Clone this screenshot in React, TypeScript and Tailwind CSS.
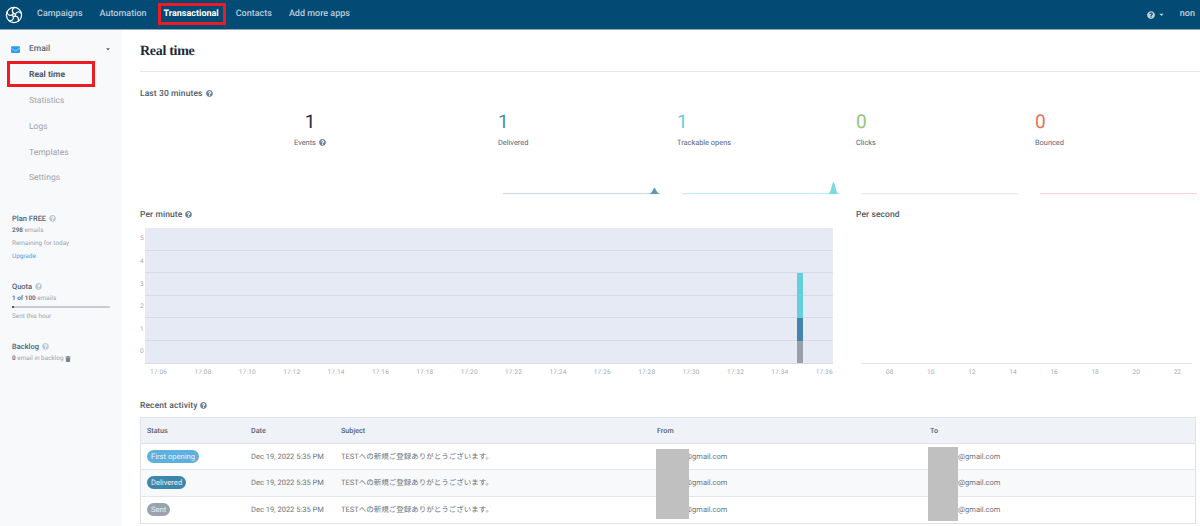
import { FaCaretDown, FaEnvelope, FaQuestionCircle, FaTrash } from 'react-icons/fa'

const navItems = ['Campaigns', 'Automation', 'Transactional', 'Contacts', 'Add more apps']
const sideItems = ['Real time', 'Statistics', 'Logs', 'Templates', 'Settings']
const minuteLabels = ['17:06', '17:08', '17:10', '17:12', '17:14', '17:16', '17:18', '17:20', '17:22', '17:24', '17:26', '17:28', '17:30', '17:32', '17:34', '17:36']
const secondLabels = ['08', '10', '12', '14', '16', '18', '20', '22']
const subject = 'TESTへの新規ご登録ありがとうございます。'

const stats = [
  { value: '1', label: 'Delivered', color: 'text-[#4c8cb0]', line: '#c9dfe9', peak: '#5f9ab9', top: 7 },
  { value: '1', label: 'Trackable opens', color: 'text-[#65d0dc]', line: '#c6eef2', peak: '#7dd8e2', top: 1 },
  { value: '0', label: 'Clicks', color: 'text-[#93c47d]', line: '#f0e6e6', peak: '', top: 0 },
  { value: '0', label: 'Bounced', color: 'text-[#e5705c]', line: '#f8d4d4', peak: '', top: 0 },
]

const rows = [
  { status: 'First opening', badge: 'bg-[#5fb0de]' },
  { status: 'Delivered', badge: 'bg-[#3f86ab]' },
  { status: 'Sent', badge: 'bg-[#9aa3ad]' },
]

function Help({ light }: { light?: boolean }) {
  return <FaQuestionCircle className={`inline-block w-[7px] h-[7px] ml-[3px] align-[-0.5px] ${light ? 'text-[#bccad8]' : 'text-[#6f8699]'}`} />
}

function Logo() {
  return (
    <svg width="18" height="18" viewBox="0 0 18 18" fill="none" stroke="white" strokeWidth="1.25" strokeLinecap="round">
      <circle cx="9" cy="9" r="7.6" />
      <circle cx="9" cy="9" r="1.5" />
      {[0, 72, 144, 216, 288].map(deg => (
        <path key={deg} d="M9 7.5C6.5 6 6.8 3 9.5 1.4" transform={`rotate(${deg} 9 9)`} />
      ))}
    </svg>
  )
}

function Sparkline({ line, peak, top }: { line: string; peak: string; top: number }) {
  return (
    <svg width="157" height="14" viewBox="0 0 157 14" className="block">
      <rect x="0" y="12" width="157" height="1.2" fill={line} />
      {peak && <path d={`M146 13 C149 13 150 ${top} 151.5 ${top} C153 ${top} 154 13 157 13Z`} fill={peak} />}
    </svg>
  )
}

export default function App() {
  return (
    <div className="w-[1200px] h-[526px] overflow-hidden bg-white flex flex-col relative text-[#4b5563] [text-rendering:geometricPrecision]" style={{ fontFamily: 'Roboto, "Noto Sans CJK JP", sans-serif' }}>
      <header className="h-[30px] shrink-0 bg-[#034a74] border-b border-[#8fa8b9] flex items-center pl-[5px] pr-[3px]">
        <Logo />
        <nav className="flex items-center gap-[17px] ml-[14px] mt-[1px]">
          {navItems.map(item => (
            <span
              key={item}
              className={`text-[9px] ${item === 'Transactional' ? 'font-bold text-white' : 'font-medium text-[#b9cedb]'}`}
            >
              {item}
            </span>
          ))}
        </nav>
        <div className="ml-auto flex items-center text-[#c3d3dd]">
          <FaQuestionCircle className="w-[8px] h-[8px]" />
          <FaCaretDown className="w-[7px] h-[7px] ml-[3px]" />
          <span className="text-[9px] font-medium ml-[15px] mr-[2px]">non</span>
        </div>
      </header>

      <div className="flex flex-1 min-h-0">
        <aside className="w-[122px] shrink-0 bg-[#f8f9fb] pt-[12px] text-[8.5px]">
          <div className="flex items-center h-[14px] pl-[11px] pr-[11px]">
            <FaEnvelope className="w-[9px] h-[9px] text-[#2f9df0]" />
            <span className="ml-[9px] font-medium text-[#5b6675]">Email</span>
            <FaCaretDown className="w-[6px] h-[6px] ml-auto text-[#5b6675]" />
          </div>
          <ul className="mt-[7px] flex flex-col">
            {sideItems.map(item => (
              <li
                key={item}
                className={`h-[25.7px] flex items-center pl-[29px] ${item === 'Real time' ? 'font-bold text-[#4d5968]' : 'text-[#9aa3ae]'}`}
              >
                {item}
              </li>
            ))}
          </ul>

          <div className="pl-[12px] mt-[22px]">
            <p className="h-[11px] leading-[11px] text-[7.5px] font-medium text-[#566170]">Plan FREE<Help light /></p>
            <p className="h-[13px] leading-[13px] text-[6.4px] text-[#9aa3ae]"><b className="text-[#6b7583]">298</b> emails</p>
            <p className="h-[13px] leading-[13px] text-[6.4px] text-[#9aa3ae]">Remaining for today</p>
            <p className="h-[13px] leading-[13px] text-[6.4px] text-[#4ea1e6]">Upgrade</p>
          </div>

          <div className="pl-[12px] mt-[18px]">
            <p className="h-[11px] leading-[11px] text-[7.5px] font-medium text-[#566170]">Quota<Help light /></p>
            <p className="h-[13px] leading-[13px] text-[6.4px] text-[#9aa3ae]"><b className="text-[#6b7583]">1 of 100</b> emails</p>
            <div className="w-[98px] h-[2px] mt-[1px] rounded-full bg-[#c9ccd1]">
              <div className="w-[2px] h-[2px] bg-[#4b5563]" />
            </div>
            <p className="h-[13px] leading-[13px] mt-[2px] text-[6.4px] text-[#9aa3ae]">Sent this hour</p>
          </div>

          <div className="pl-[12px] mt-[18px]">
            <p className="h-[11px] leading-[11px] text-[7.5px] font-medium text-[#566170]">Backlog<Help light /></p>
            <p className="h-[13px] leading-[13px] text-[6.4px] text-[#9aa3ae] flex items-center">
              <b className="text-[#6b7583]">0</b>&nbsp;email in backlog
              <FaTrash className="w-[6px] h-[6px] ml-[1px] text-[#7b8591]" />
            </p>
          </div>
        </aside>

        <main className="flex-1 min-w-0 pl-[18px]">
          <div className="h-[42px] border-b border-[#e3e7eb] flex items-start pt-[12px]">
            <h1 className="text-[14px] leading-[20px] tracking-[-0.3px] font-bold text-[#1b2a3d]" style={{ fontFamily: '"Liberation Serif", serif' }}>Real time</h1>
          </div>

          <p className="mt-[15px] h-[14px] leading-[14px] text-[8.5px] font-medium tracking-[0.1px] text-[#4f5a68]">Last 30 minutes<Help /></p>

          <div className="grid grid-cols-[358px_179px_179px_179px_166px] mt-[7px]">
            <div className="pr-[18px] text-center">
              <p className="h-[28px] leading-[28px] text-[19px] text-[#1f2d3d]">1</p>
              <p className="mt-[1px] h-[12px] leading-[12px] text-[7.4px] text-[#5b6675]">Events<Help /></p>
            </div>
            {stats.map(s => (
              <div key={s.label}>
                <p className={`h-[28px] leading-[28px] text-[19px] ${s.color}`}>{s.value}</p>
                <p className="mt-[1px] h-[12px] leading-[12px] text-[7.4px] text-[#5b6675]">{s.label}</p>
                <div className="mt-[32px] ml-[5px]">
                  <Sparkline line={s.line} peak={s.peak} top={s.top} />
                </div>
              </div>
            ))}
          </div>

          <div className="flex mt-[13px]">
            <section className="w-[716px] shrink-0">
              <p className="h-[14px] leading-[14px] text-[8.5px] font-medium tracking-[0.1px] text-[#4f5a68]">Per minute<Help /></p>
              <div className="flex mt-[6px]">
                <div className="w-[5px] h-[136px] flex flex-col text-[6.5px] text-[#a3abb5]">
                  {['5', '4', '3', '2', '1', '0'].map(n => (
                    <span key={n} className="h-[22.6px] flex items-center">{n}</span>
                  ))}
                </div>
                <div className="w-[688px]">
                  <div className="relative h-[136px] bg-[#e6eaf5] flex flex-col">
                    {[0, 1, 2, 3, 4, 5].map(i => (
                      <div key={i} className="h-[22.6px] border-b border-[#d6dbe6]" />
                    ))}
                    <div className="absolute left-[652px] top-[45px] w-[6px] h-[90px] flex flex-col">
                      <div className="h-[45px] bg-[#63d0dc]" />
                      <div className="h-[23px] bg-[#4585ad]" />
                      <div className="h-[22px] bg-[#9aa0aa]" />
                    </div>
                  </div>
                  <div className="flex justify-between pl-[5px] pr-0 mt-[2px] h-[12px] leading-[12px] text-[6.5px] tracking-[0.2px] text-[#a3abb5]">
                    {minuteLabels.map(l => <span key={l}>{l}</span>)}
                  </div>
                </div>
              </div>
            </section>

            <section className="flex-1 min-w-0">
              <p className="h-[14px] leading-[14px] text-[8.5px] font-medium tracking-[0.1px] text-[#4f5a68]">Per second</p>
              <div className="mt-[6px] ml-[5px] w-[331px]">
                <div className="h-[136px] border-b border-[#e0e4ef]" />
                <div className="flex justify-between pl-[25px] pr-[11px] mt-[2px] h-[12px] leading-[12px] text-[6.5px] text-[#a3abb5]">
                  {secondLabels.map(l => <span key={l}>{l}</span>)}
                </div>
              </div>
            </section>
          </div>

          <p className="mt-[21px] h-[14px] leading-[14px] text-[8.5px] font-medium tracking-[0.1px] text-[#4f5a68]">Recent activity<Help /></p>

          <div className="relative mt-[4px] w-[1056px] border border-[#dfe3e8] text-[7.5px]">
            <div className="grid grid-cols-[104px_90px_316px_273px_1fr] h-[26px] pt-[1px] items-center pl-[6px] bg-[#eff2f7] border-b border-[#dfe3e8] text-[7.2px] font-medium text-[#566170]">
              <span>Status</span>
              <span>Date</span>
              <span>Subject</span>
              <span>From</span>
              <span>To</span>
            </div>
            {rows.map((r, i) => (
              <div
                key={r.status}
                className={`grid grid-cols-[104px_90px_316px_273px_1fr] h-[26.3px] items-center pl-[6px] text-[#6a7480] ${i === 1 ? 'bg-[#f8f9fb]' : 'bg-white'} ${i < 2 ? 'border-b border-[#e3e7eb]' : ''}`}
              >
                <span>
                  <span className={`inline-block h-[13px] leading-[13px] px-[4px] rounded-full text-[7.6px] text-[#e8f2f7] ${r.badge}`}>{r.status}</span>
                </span>
                <span>Dec 19, 2022 5:35 PM</span>
                <span>{subject}</span>
                <span>example@gmail.com</span>
                <span>example@gmail.com</span>
              </div>
            ))}
            <div className="absolute left-[515px] top-[31px] w-[33px] h-[70px] bg-[#c0c0c0]" />
            <div className="absolute left-[787px] top-[29px] w-[30px] h-[74px] bg-[#c0c0c0]" />
          </div>
        </main>
      </div>

      <div className="absolute left-[158px] top-[3px] w-[68px] h-[22px] border-[3px] border-[#ed1c24]" />
      <div className="absolute left-[7px] top-[61px] w-[88px] h-[26px] border-[3px] border-[#ed1c24]" />
    </div>
  )
}
